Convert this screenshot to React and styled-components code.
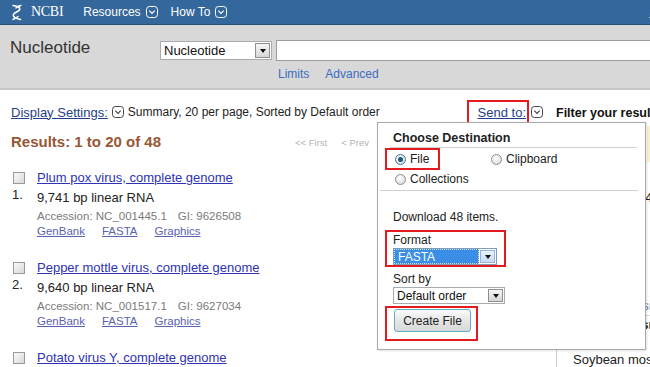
import React from 'react';
import styled, { createGlobalStyle } from 'styled-components';

const GlobalStyle = createGlobalStyle`
  html, body { margin: 0; padding: 0; background: #fff; }
  body { font-family: "Liberation Sans", Arial, sans-serif; overflow: hidden; color: #222; }
  * { box-sizing: border-box; }
`;

const Page = styled.div`
  width: 650px;
  height: 367px;
  overflow: hidden;
  background: #fff;
`;

/* ---------- top bar ---------- */
const TopBar = styled.header`
  height: 25px;
  background: #34679b;
  border-bottom: 1px solid #264f7a;
  display: flex;
  align-items: center;
  padding-left: 10px;
  white-space: nowrap;
  color: #fff;
`;

const Brand = styled.div`
  display: flex;
  align-items: center;
  gap: 7px;
  font-family: "Liberation Serif", "Times New Roman", serif;
  font-size: 14px;
  letter-spacing: -0.3px;
`;

const NavMenu = styled.nav`
  display: flex;
  align-items: center;
  gap: 13px;
  margin-left: 20px;
`;

const NavItem = styled.span`
  display: flex;
  align-items: center;
  gap: 5px;
  font-size: 12px;
  color: #fff;
`;

const SignIn = styled.a`
  margin-left: 422px;
  font-size: 12px;
  color: #fff;
  text-decoration: underline;
`;

/* ---------- search area ---------- */
const SearchArea = styled.section`
  height: 65px;
  background: #d8d8d8;
  border-bottom: 2px solid #c6c6c6;
  padding: 15px 0 0 10px;
  white-space: nowrap;
`;

const SearchRow = styled.div`
  display: flex;
  align-items: center;
  height: 21px;
`;

const DbTitle = styled.h1`
  margin: 0;
  width: 150px;
  flex: 0 0 150px;
  font-size: 17px;
  font-weight: normal;
  color: #333;
  line-height: 21px;
  position: relative;
  top: -3px;
`;

const SelectBox = styled.div`
  display: flex;
  align-items: stretch;
  width: ${p => p.$w}px;
  height: ${p => p.$h || 17}px;
  background: #fff;
  border: 1px solid ${p => (p.$active ? '#7f9db9' : '#a5acb2')};
  font-size: ${p => p.$fs || 12}px;
  flex: 0 0 auto;
`;

const SelectText = styled.span`
  flex: 1;
  display: flex;
  align-items: center;
  padding-left: 3px;
  background: ${p => (p.$selected ? '#3a8ee6' : '#fff')};
  color: ${p => (p.$selected ? '#fff' : '#111')};
  border: ${p => (p.$selected ? '1px dotted #c8ddf5' : 'none')};
`;

const SelectArrow = styled.span`
  width: 15px;
  flex: 0 0 15px;
  margin: 1px;
  border: 1px solid ${p => (p.$active ? '#98b4d6' : '#8f8f8f')};
  background: ${p => (p.$active ? 'linear-gradient(#e8f1fb, #c9dcf2)' : 'linear-gradient(#f6f6f6, #d6d6d6)')};
  display: flex;
  align-items: center;
  justify-content: center;
  &::after {
    content: '';
    border-left: 3.5px solid transparent;
    border-right: 3.5px solid transparent;
    border-top: 4px solid #111;
  }
`;

const SearchInput = styled.div`
  margin-left: 4px;
  flex: 0 0 400px;
  height: 21px;
  background: #fff;
  border: 1px solid #9c9c9c;
  border-right: none;
`;

const LinksRow = styled.div`
  display: flex;
  gap: 16px;
  margin: 6px 0 0 268px;
  font-size: 12px;
  line-height: 15px;
`;

const SearchLink = styled.a`
  color: #3b6cc0;
  text-decoration: none;
`;

/* ---------- content ---------- */
const Content = styled.div`
  position: relative;
  display: flex;
  padding-top: 10px;
  white-space: nowrap;
`;

const Main = styled.main`
  flex: 0 0 556px;
  width: 556px;
  padding: 0 13px 0 11px;
`;

const DisplayBar = styled.div`
  height: 24px;
  display: flex;
  align-items: center;
  justify-content: space-between;
  font-size: 12px;
`;

const DisplaySettings = styled.div`
  display: flex;
  align-items: center;
  gap: 4px;
`;

const DarkLink = styled.a`
  color: #1f3f8c;
  font-size: 13px;
  text-decoration: underline;
`;

const SendTo = styled.div`
  display: flex;
  align-items: center;
  gap: 2px;
`;

const RedBox = styled.div`
  border: 2px solid #e31b1f;
`;

const SendBox = styled(RedBox)`
  height: 24px;
  padding: 0 1px 0 9px;
  display: flex;
  align-items: center;
`;

const ResultsRow = styled.div`
  margin-top: 8px;
  display: grid;
  grid-template-columns: 284px auto;
  align-items: center;
  height: 18px;
`;

const ResultsTitle = styled.h2`
  margin: 0;
  font-size: 15px;
  font-weight: bold;
  color: #985735;
`;

const Pager = styled.div`
  display: flex;
  gap: 14px;
  font-size: 9.5px;
  color: #b5b5b5;
  padding-top: 3px;
`;

const ItemList = styled.ol`
  list-style: none;
  margin: 20px 0 0;
  padding: 0;
`;

const Item = styled.li`
  display: grid;
  grid-template-columns: 26px 1fr;
  margin-bottom: 20px;
`;

const ItemSide = styled.div`
  display: flex;
  flex-direction: column;
  align-items: flex-start;
`;

const Checkbox = styled.span`
  width: 12px;
  height: 12px;
  margin: 2px 0 0 2px;
  border: 1px solid #9a9a9a;
  background: linear-gradient(135deg, #fafafa, #d9d9d9);
`;

const ItemNum = styled.span`
  margin-top: 3px;
  margin-left: 1px;
  font-size: 13px;
  line-height: 16px;
  color: #222;
`;

const ItemBody = styled.div`
  display: flex;
  flex-direction: column;
`;

const ItemTitle = styled.a`
  font-size: 13px;
  line-height: 16px;
  color: #2e34b4;
  text-decoration: underline;
`;

const ItemDesc = styled.div`
  margin-top: 4px;
  font-size: 13px;
  line-height: 16px;
  color: #222;
`;

const ItemMeta = styled.div`
  display: flex;
  gap: 11px;
  margin-top: 3px;
  font-size: 11.5px;
  line-height: 15px;
  color: #7a7a7a;
`;

const ItemLinks = styled.div`
  display: flex;
  gap: 17px;
  font-size: 11.5px;
  line-height: 15px;
  margin-bottom: 1px;
`;

const SmallLink = styled.a`
  color: #5b61b3;
  text-decoration: underline;
`;

/* ---------- sidebar ---------- */
const Sidebar = styled.aside`
  flex: 0 0 260px;
  width: 260px;
`;

const SideHeading = styled.h3`
  margin: 0;
  height: 26px;
  line-height: 26px;
  font-size: 12.5px;
  font-weight: bold;
  color: #111;
`;

const SideBody = styled.div`
  border-left: 1px solid #cfcfcf;
`;

const SidePanel = styled.div`
  height: 36px;
  background: #fbf1c8;
  margin-left: 90px;
`;

const SideList = styled.ul`
  list-style: none;
  margin: 0;
  padding: 9px 0 0 16px;
  font-size: 13px;
`;

const SideEntry = styled.li`
  height: 18px;
  line-height: 18px;
  color: ${p => (p.$muted ? '#5a7fc0' : '#222')};
  font-weight: ${p => (p.$bold ? 'bold' : 'normal')};
  border-top: ${p => (p.$rule ? '1px solid #ddd' : 'none')};
`;

/* ---------- popup ---------- */
const Popup = styled.div`
  position: absolute;
  left: 377px;
  top: 32px;
  width: 269px;
  height: 228px;
  background: #fff;
  border: 1px solid #a9a9a9;
  box-shadow: 1px 1px 2px rgba(0, 0, 0, 0.12);
  font-size: 12px;
  color: #222;
`;

const PopupTitle = styled.div`
  margin: 0 8px 0 12px;
  padding: 7px 0 1px 3px;
  line-height: 16px;
  font-weight: bold;
  font-size: 12.5px;
  border-bottom: 1px solid #d0d0d0;
`;

const RadioRow = styled.div`
  display: flex;
  align-items: center;
  height: ${p => p.$h || 18}px;
  padding-left: ${p => p.$pad || 0}px;
`;

const RadioLabel = styled.label`
  display: flex;
  align-items: center;
  gap: 4px;
  margin-left: ${p => p.$ml || 0}px;
`;

const Radio = styled.span`
  width: 11px;
  height: 11px;
  border-radius: 50%;
  border: 1px solid ${p => (p.$checked ? '#3d7598' : '#8e8e8e')};
  background: radial-gradient(circle at 40% 35%, #ffffff, #d4d4d4);
  display: inline-flex;
  align-items: center;
  justify-content: center;
  &::after {
    content: '';
    width: 5px;
    height: 5px;
    border-radius: 50%;
    background: ${p => (p.$checked ? '#1d5a78' : 'transparent')};
  }
`;

const FileBox = styled(RedBox)`
  width: 55px;
  height: 22px;
  margin-left: 7px;
  padding-left: 8px;
  display: flex;
  align-items: center;
`;

const Divider = styled.hr`
  margin: 2px 7px 0 2px;
  border: none;
  border-top: 1px solid #d0d0d0;
`;

const PopupText = styled.div`
  margin: ${p => p.$mt || 0}px 0 0 15px;
  line-height: 16px;
`;

const FormatBox = styled(RedBox)`
  width: 121px;
  margin: 5px 0 0 7px;
  padding: 0 0 0 6px;
`;

const FieldLabel = styled.div`
  line-height: 16px;
`;

const SortBlock = styled.div`
  margin: 4px 0 0 15px;
`;

const ButtonBox = styled(RedBox)`
  width: 93px;
  height: 35px;
  margin: 2px 0 0 7px;
  padding: 1px 0 0 7px;
`;

const CreateButton = styled.button`
  width: 77px;
  height: 23px;
  font-family: inherit;
  font-size: 12px;
  color: #222;
  border: 1px solid #5eaecb;
  border-radius: 3px;
  background: linear-gradient(#fbfbfb, #e6e6e6 50%, #d8d8d8);
  padding: 0;
`;

/* ---------- icons ---------- */
const DropIcon = ({ color = '#444' }) => (
  <svg width="12" height="12" viewBox="0 0 12 12" style={{ flex: '0 0 12px' }}>
    <rect x="0.5" y="0.5" width="11" height="11" rx="3" fill="none" stroke={color} strokeWidth="1" />
    <path d="M3.3 4.6 L6 7.3 L8.7 4.6" fill="none" stroke={color} strokeWidth="1.2" />
  </svg>
);

const HelixLogo = () => (
  <svg width="14" height="17" viewBox="0 0 14 17">
    <path d="M3 1.5 C11 2.5 11.5 5.5 6.5 8 C1.5 10.5 2 13.8 10.5 15.5" fill="none" stroke="#fff" strokeWidth="1.6" strokeLinecap="round" />
    <path d="M11 1.5 C8 2.2 6.5 3 6 4" fill="none" stroke="#fff" strokeWidth="1.4" strokeLinecap="round" />
    <path d="M8 12.5 C7 13.5 5 14.5 3 15.5" fill="none" stroke="#fff" strokeWidth="1.4" strokeLinecap="round" />
  </svg>
);

const FakeSelect = ({ w, h, fs, text, selected, active }) => (
  <SelectBox $w={w} $h={h} $fs={fs} $active={active}>
    <SelectText $selected={selected}>{text}</SelectText>
    <SelectArrow $active={active} />
  </SelectBox>
);

const items = [
  { n: 1, title: 'Plum pox virus, complete genome', desc: '9,741 bp linear RNA', acc: 'NC_001445.1', gi: '9626508' },
  { n: 2, title: 'Pepper mottle virus, complete genome', desc: '9,640 bp linear RNA', acc: 'NC_001517.1', gi: '9627034' },
  { n: 3, title: 'Potato virus Y, complete genome', desc: '9,704 bp linear RNA', acc: 'NC_001616.1', gi: '9627240' },
];

const sideEntries = [
  { t: 'Taxon' },
  { t: 'Potyviridae (48)' },
  { t: 'Viruses' },
  { t: 'Plants' },
  { t: 'Fungi' },
  { t: 'Bacteria' },
  { t: 'Other' },
  { t: 'More organisms', muted: true },
  { t: 'Top Organism', bold: true, rule: true },
  { t: 'Tree' },
  { t: 'Soybean mosaic virus' },
];

export default function App() {
  return (
    <Page>
      <GlobalStyle />
      <TopBar>
        <Brand>
          <HelixLogo />
          <span>NCBI</span>
        </Brand>
        <NavMenu>
          <NavItem>Resources <DropIcon color="#fff" /></NavItem>
          <NavItem>How To <DropIcon color="#fff" /></NavItem>
        </NavMenu>
        <SignIn>Sign in to NCBI</SignIn>
      </TopBar>

      <SearchArea>
        <SearchRow>
          <DbTitle>Nucleotide</DbTitle>
          <FakeSelect w={112} h={19} fs={13} text="Nucleotide" />
          <SearchInput />
        </SearchRow>
        <LinksRow>
          <SearchLink>Limits</SearchLink>
          <SearchLink>Advanced</SearchLink>
        </LinksRow>
      </SearchArea>

      <Content>
        <Main>
          <DisplayBar>
            <DisplaySettings>
              <DarkLink>Display Settings:</DarkLink>
              <DropIcon />
              <span>Summary, 20 per page, Sorted by Default order</span>
            </DisplaySettings>
            <SendTo>
              <SendBox>
                <DarkLink>Send to:</DarkLink>
              </SendBox>
              <DropIcon />
            </SendTo>
          </DisplayBar>

          <ResultsRow>
            <ResultsTitle>Results: 1 to 20 of 48</ResultsTitle>
            <Pager>
              <span>&lt;&lt; First</span>
              <span>&lt; Prev</span>
            </Pager>
          </ResultsRow>

          <ItemList>
            {items.map(it => (
              <Item key={it.n}>
                <ItemSide>
                  <Checkbox />
                  <ItemNum>{it.n}.</ItemNum>
                </ItemSide>
                <ItemBody>
                  <ItemTitle>{it.title}</ItemTitle>
                  <ItemDesc>{it.desc}</ItemDesc>
                  <ItemMeta>
                    <span>Accession: {it.acc}</span>
                    <span>GI: {it.gi}</span>
                  </ItemMeta>
                  <ItemLinks>
                    <SmallLink>GenBank</SmallLink>
                    <SmallLink>FASTA</SmallLink>
                    <SmallLink>Graphics</SmallLink>
                  </ItemLinks>
                </ItemBody>
              </Item>
            ))}
          </ItemList>
        </Main>

        <Sidebar>
          <SideHeading>Filter your results:</SideHeading>
          <SideBody>
            <SidePanel />
            <SideList>
              {sideEntries.map(e => (
                <SideEntry key={e.t} $bold={e.bold} $muted={e.muted} $rule={e.rule}>{e.t}</SideEntry>
              ))}
            </SideList>
          </SideBody>
        </Sidebar>

        <Popup>
          <PopupTitle>Choose Destination</PopupTitle>
          <RadioRow $h={22}>
            <FileBox>
              <RadioLabel>
                <Radio $checked />
                File
              </RadioLabel>
            </FileBox>
            <RadioLabel $ml={51}>
              <Radio />
              Clipboard
            </RadioLabel>
          </RadioRow>
          <RadioRow $pad={17}>
            <RadioLabel>
              <Radio />
              Collections
            </RadioLabel>
          </RadioRow>
          <Divider />
          <PopupText $mt={18}>Download 48 items.</PopupText>
          <FormatBox>
            <FieldLabel>Format</FieldLabel>
            <FakeSelect w={104} h={17} text="FASTA" selected active />
          </FormatBox>
          <SortBlock>
            <FieldLabel>Sort by</FieldLabel>
            <FakeSelect w={112} h={17} text="Default order" />
          </SortBlock>
          <ButtonBox>
            <CreateButton>Create File</CreateButton>
          </ButtonBox>
        </Popup>
      </Content>
    </Page>
  );
}
